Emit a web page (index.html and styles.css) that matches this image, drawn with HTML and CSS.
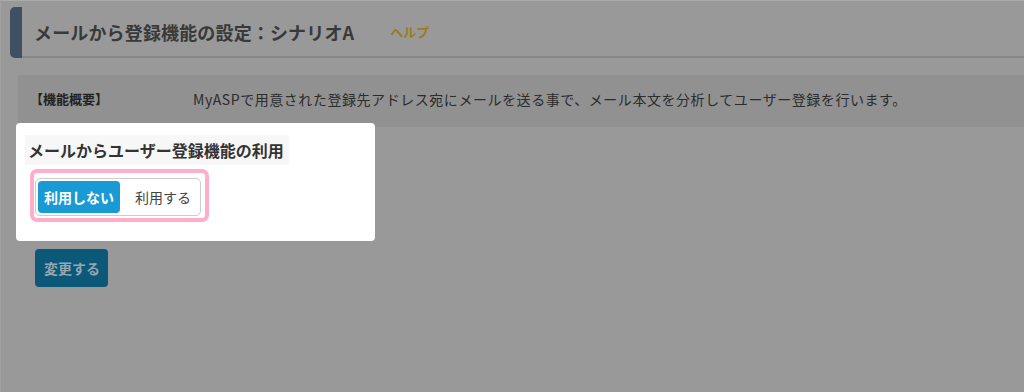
FILE: index.html
```html
<!DOCTYPE html>
<html lang="ja">
<head>
<meta charset="utf-8">
<title>メールから登録機能の設定</title>
<link rel="stylesheet" href="styles.css">
</head>
<body>
<div class="page">
  <div class="header">
    <div class="header-bar"></div>
    <div class="header-main">
      <h1 class="title">メールから登録機能の設定：シナリオA</h1>
      <a class="help">ヘルプ</a>
    </div>
  </div>
  <div class="overview">
    <div class="overview-label">【機能概要】</div>
    <div class="overview-text">MyASPで用意された登録先アドレス宛にメールを送る事で、メール本文を分析してユーザー登録を行います。</div>
  </div>
  <div class="panel">
    <div class="panel-heading">メールからユーザー登録機能の利用</div>
    <div class="highlight">
      <div class="toggle">
        <span class="toggle-btn active">利用しない</span>
        <span class="toggle-btn">利用する</span>
      </div>
    </div>
  </div>
  <div class="actions">
    <span class="submit">変更する</span>
  </div>
</div>
</body>
</html>
```
FILE: styles.css
```css
html, body {
  margin: 0;
  padding: 0;
  height: 100%;
}
body {
  background: #999999;
  font-family: "Noto Sans CJK JP", "Noto Sans", sans-serif;
  color: #333;
}
.page {
  min-height: 100%;
  box-sizing: border-box;
  border-top: 1px solid #aaaaaa;
  border-left: 1px solid #a2a2a2;
}
.header {
  display: flex;
  margin: 6px 0 0 9px;
  height: 51px;
}
.header-bar {
  width: 12px;
  background: #3e5062;
  border-radius: 5px 0 0 5px;
}
.header-main {
  flex: 1;
  display: flex;
  align-items: center;
  border-bottom: 2px solid #878787;
  padding-left: 12px;
}
.title {
  margin: 0;
  font-size: 18px;
  font-weight: bold;
  color: #393939;
  line-height: 24px;
  letter-spacing: 0.15px;
}
.help {
  margin-left: 36px;
  font-size: 13px;
  font-weight: bold;
  color: #9c7a1e;
}
.overview {
  display: grid;
  grid-template-columns: 175px auto;
  margin: 17px 0 0 17px;
  background: #919191;
  padding: 13px 0 17px;
  line-height: 22px;
}
.overview-label {
  padding-left: 12px;
  font-size: 13px;
  font-weight: bold;
  color: #222;
}
.overview-text {
  font-size: 14px;
  color: #2c2c2c;
  white-space: nowrap;
  letter-spacing: 0.55px;
}
.panel {
  width: 359px;
  box-sizing: border-box;
  margin: -4px 0 0 15px;
  background: #ffffff;
  border-radius: 4px;
  padding: 12px 0 19px 9px;
  position: relative;
}
.panel-heading {
  display: inline-block;
  background: #f7f7f7;
  font-size: 16px;
  font-weight: bold;
  color: #333;
  line-height: 30px;
  padding: 0 5px 0 3px;
}
.highlight {
  display: flex;
  width: fit-content;
  margin: 4px 0 0 5px;
  border: 4px solid #ffadc8;
  border-radius: 7px;
  padding: 5px 4px 2px 1px;
}
.toggle {
  display: flex;
  border: 1px solid #cccccc;
  border-radius: 5px;
  padding: 2px;
}
.toggle-btn {
  display: block;
  height: 32px;
  line-height: 32px;
  font-size: 14px;
  color: #444;
  padding: 0 7px 0 15px;
  border-radius: 4px;
}
.toggle-btn.active {
  background: #1a9ad5;
  color: #ffffff;
  font-weight: bold;
  padding: 0 6px;
}
.actions {
  margin: 8px 0 0 34px;
  display: flex;
}
.submit {
  display: block;
  height: 38px;
  line-height: 38px;
  padding: 0 8px 0 9px;
  background: #0b5878;
  color: #94a7b2;
  font-size: 14px;
  font-weight: bold;
  border-radius: 4px;
}
```
